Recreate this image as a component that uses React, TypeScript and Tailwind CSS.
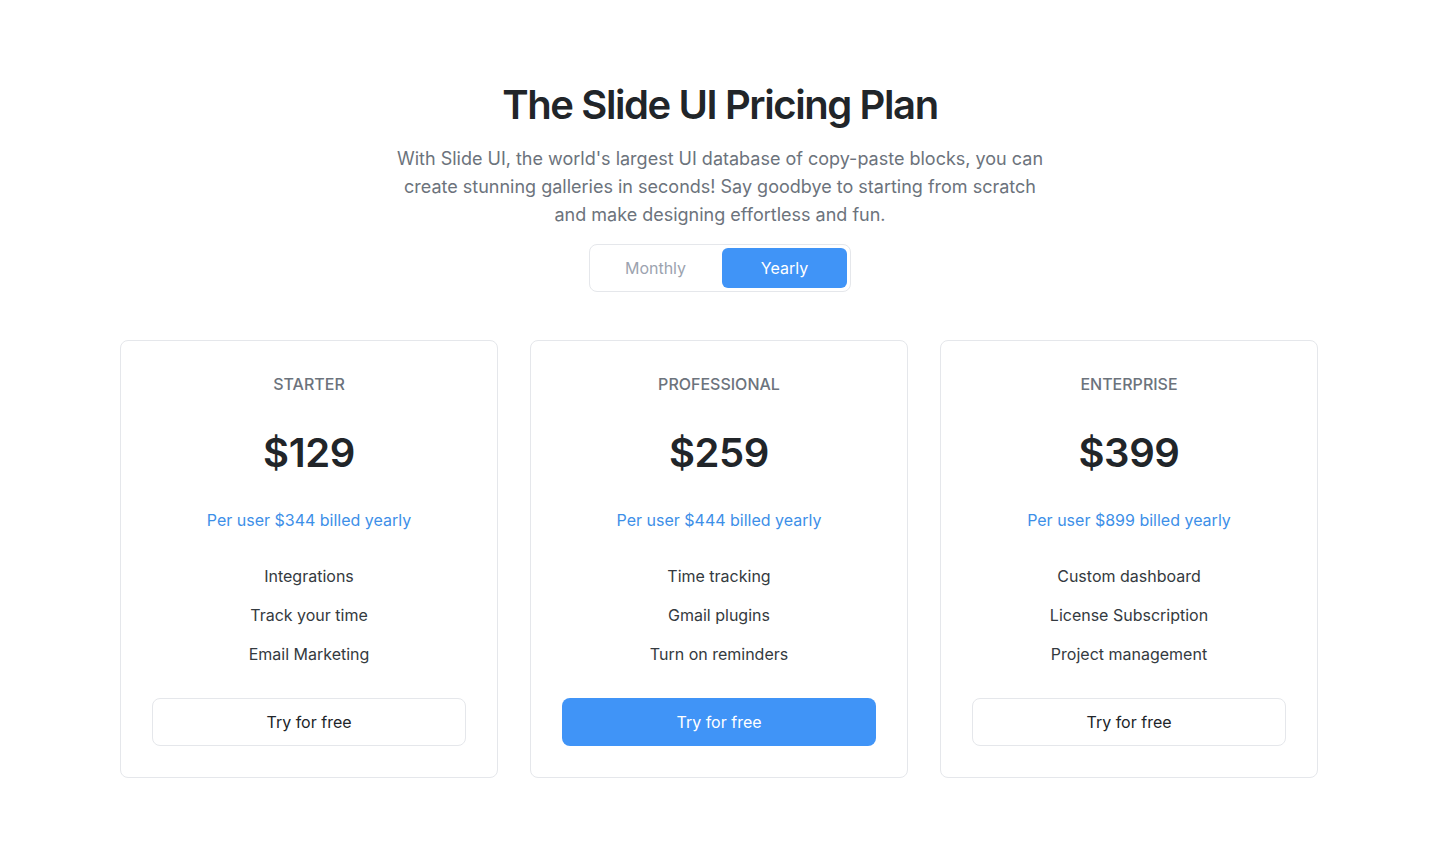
import React from "react";

const plans = [
  { name: "STARTER", price: "$129", billed: "Per user $344 billed yearly", features: ["Integrations", "Track your time", "Email Marketing"], primary: false },
  { name: "PROFESSIONAL", price: "$259", billed: "Per user $444 billed yearly", features: ["Time tracking", "Gmail plugins", "Turn on reminders"], primary: true },
  { name: "ENTERPRISE", price: "$399", billed: "Per user $899 billed yearly", features: ["Custom dashboard", "License Subscription", "Project management"], primary: false },
];

export default function App() {
  return (
    <div className="min-h-[858px] bg-white font-['Inter',sans-serif] pt-[81px] pb-20">
      <div className="mx-auto w-[1200px] flex flex-col items-center">
        <h1 className="text-[40px] leading-[48px] font-semibold text-[#212529] tracking-[-0.035em]">The Slide UI Pricing Plan</h1>
        <p className="mt-4 w-[660px] text-center text-[18px] leading-[28px] text-[#6c737c]">
          With Slide UI, the world's largest UI database of copy-paste blocks, you can create stunning galleries in seconds! Say goodbye to starting from scratch and make designing effortless and fun.
        </p>
        <div className="mt-[15px] flex gap-1 rounded-lg border border-[#e5e7eb] p-[3px]">
          <button className="h-10 w-[125px] rounded-md text-[16px] text-[#9ca3af]">Monthly</button>
          <button className="h-10 w-[125px] rounded-md bg-[#4094f7] text-[16px] text-white">Yearly</button>
        </div>
        <div className="mt-12 grid w-full grid-cols-[repeat(3,378px)] gap-8 justify-start">
          {plans.map((p) => (
            <div key={p.name} className="flex flex-col items-center rounded-lg border border-[#e5e7eb] px-[31px] pt-[31px] pb-[31px]">
              <div className="text-[16px] leading-6 font-medium text-[#6c737c]">{p.name}</div>
              <div className="mt-[33px] text-[40px] leading-[48px] font-semibold text-[#212529] tracking-[-0.01em]">{p.price}</div>
              <div className="mt-[31px] text-[16px] leading-6 text-[#3d8fe8]">{p.billed}</div>
              <div className="mt-8 flex flex-col items-center gap-[15px]">
                {p.features.map((f) => (
                  <div key={f} className="text-[16px] leading-6 text-[#343a40]">{f}</div>
                ))}
              </div>
              <button
                className={
                  p.primary
                    ? "mt-8 h-12 w-full rounded-lg bg-[#4094f7] text-[16px] text-white"
                    : "mt-8 h-12 w-full rounded-lg border border-[#e5e7eb] bg-white text-[16px] text-[#212529]"
                }
              >
                Try for free
              </button>
            </div>
          ))}
        </div>
      </div>
    </div>
  );
}
